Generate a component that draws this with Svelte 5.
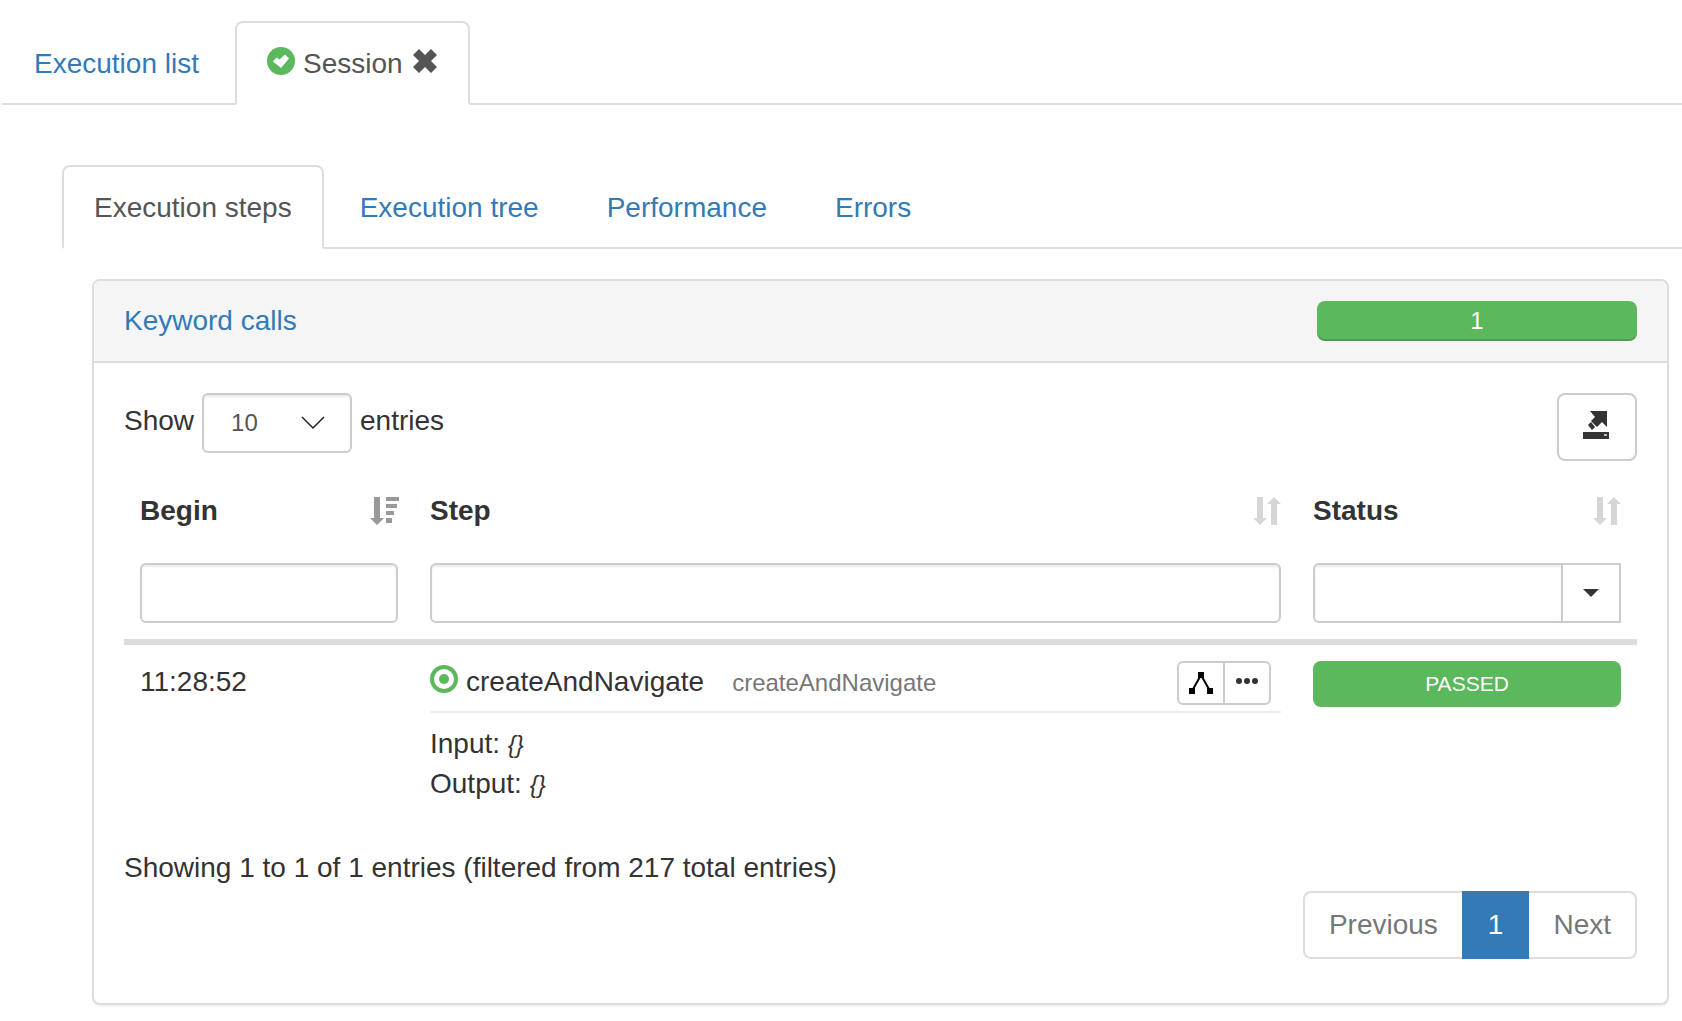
<script>
  let tab = $state('steps');
  let pageSize = $state('10');
  const tabs = [
    ['steps', 'Execution steps'],
    ['tree', 'Execution tree'],
    ['performance', 'Performance'],
    ['errors', 'Errors'],
  ];
</script>

{#snippet sortBoth()}
  <svg class="sort" width="28" height="28" viewBox="0 0 28 28" aria-hidden="true">
    <path d="M4 0h6v21h4l-7 7-7-7h4zM18 28h6V7h4l-7-7-7 7h4z" />
  </svg>
{/snippet}

<nav class="tabs outer">
  <a href="#list">Execution list</a>
  <a href="#session" class="active">
    <svg class="ok" width="28" height="28" viewBox="0 0 28 28" aria-hidden="true">
      <circle cx="14" cy="14" r="14" fill="#5cb85c" />
      <path d="M6 14.500l3.500-4 3 2L18 7.500l4 4L14 21z" fill="#fff" />
    </svg>
    <span>Session</span>
    <svg class="close" width="27" height="24" viewBox="-2 0 27 24" aria-hidden="true">
      <path d="M6 0l6 6 6-6 6 6-6 6 6 6-6 6-6-6-6 6-6-6 6-6-6-6z" fill="#555" />
    </svg>
  </a>
</nav>

<main>
  <nav class="tabs">
    {#each tabs as [id, label]}
      <a href={'#' + id} class:active={tab === id} onclick={() => (tab = id)}>{label}</a>
    {/each}
  </nav>

  <section class="panel">
    <header>
      <a href="#keywords">Keyword calls</a>
      <div class="progress">1</div>
    </header>

    <div class="body">
      <div class="toolbar">
        <label class="length">
          Show
          <span class="select">
            <select bind:value={pageSize}>
              <option>10</option>
              <option>25</option>
              <option>50</option>
            </select>
            <svg width="24" height="14" viewBox="0 0 24 14" aria-hidden="true">
              <path d="M1 1l11 11L23 1" fill="none" stroke="#222" stroke-width="1.500" />
            </svg>
          </span>
          entries
        </label>
        <button class="export" aria-label="Export">
          <svg width="28" height="28" viewBox="0 0 28 28" aria-hidden="true">
            <path d="M7 0h17v16l-5-5-5 5-6-6 4-4z" fill="#333" />
            <path d="M5 14l3-3 4 5-3 3z" fill="#333" />
            <path d="M0 21h26v7H0z" fill="#333" />
            <path d="M21 23h3v2h-3z" fill="#bbb" />
          </svg>
        </button>
      </div>

      <table>
        <colgroup><col class="c-begin" /><col /><col class="c-status" /></colgroup>
        <thead>
          <tr>
            <th>
              <div class="head">
                Begin
                <svg class="sort on" width="28" height="28" viewBox="0 0 28 28" aria-hidden="true">
                  <path d="M4 0h6v21h4l-7 7-7-7h4zM16 0h13v4H16zM16 7h11v4H16zM16 14h8v4h-8zM16 21h6v5h-6z" />
                </svg>
              </div>
            </th>
            <th><div class="head">Step {@render sortBoth()}</div></th>
            <th><div class="head">Status {@render sortBoth()}</div></th>
          </tr>
          <tr class="filters">
            <th><input type="text" aria-label="Filter begin" /></th>
            <th><input type="text" aria-label="Filter step" /></th>
            <th>
              <div class="combo">
                <input type="text" aria-label="Filter status" />
                <button aria-label="Choose status"><i class="caret"></i></button>
              </div>
            </th>
          </tr>
        </thead>
        <tbody>
          <tr>
            <td>11:28:52</td>
            <td>
              <div class="step">
                <svg width="28" height="28" viewBox="0 0 28 28" aria-hidden="true">
                  <circle cx="14" cy="14" r="12" fill="none" stroke="#5cb85c" stroke-width="4" />
                  <circle cx="14" cy="14" r="5" fill="#5cb85c" />
                </svg>
                <span>createAndNavigate</span>
                <small>createAndNavigate</small>
                <div class="actions">
                  <button aria-label="Show in tree">
                    <svg width="24" height="22" viewBox="0 0 24 22" aria-hidden="true">
                      <path d="M3 19l9-16 9 16" fill="none" stroke="#000" stroke-width="2" />
                      <path d="M9 0h6v6H9zM0 16h6v6H0zM18 16h6v6h-6z" />
                    </svg>
                  </button>
                  <button aria-label="More">
                    <svg class="dots" width="22" height="6" viewBox="0 0 22 6" aria-hidden="true">
                      <g fill="#333"><circle cx="3" cy="3" r="3" /><circle cx="11" cy="3" r="3" /><circle cx="19" cy="3" r="3" /></g>
                    </svg>
                  </button>
                </div>
              </div>
              <div class="io">Input: <em>{'{}'}</em></div>
              <div class="io">Output: <em>{'{}'}</em></div>
            </td>
            <td><div class="badge">PASSED</div></td>
          </tr>
        </tbody>
      </table>

      <p class="info">Showing 1 to 1 of 1 entries (filtered from 217 total entries)</p>
      <nav class="pages" aria-label="Pages">
        <a href="#prev">Previous</a>
        <a href="#1" class="current">1</a>
        <a href="#next">Next</a>
      </nav>
    </div>
  </section>
</main>

<style>
  :global(body) {
    font: 28px/40px 'Liberation Sans', Arial, sans-serif;
    color: #333;
    background: #fff;
  }
  :global(#app) { overflow-x: clip; }
  * { box-sizing: border-box; }
  a { color: #337ab7; text-decoration: none; }
  svg { display: block; flex: none; }
  input, select, button { font: inherit; margin: 0; }

  .tabs { display: flex; gap: 4px; border-bottom: 2px solid #ddd; }
  .tabs a {
    display: flex;
    align-items: center;
    gap: 8px;
    padding: 21px 30px 19px;
    margin-bottom: -2px;
    border: 2px solid transparent;
    border-radius: 8px 8px 0 0;
  }
  .tabs a.active { color: #555; background: #fff; border-color: #ddd #ddd transparent; }
  .outer { margin: 21px 0 0 2px; }
  .ok, .close { margin-bottom: 6px; }

  main { padding: 60px 0 16px 62px; }
  .panel {
    margin: 30px 13px 0 30px;
    border: 2px solid #ddd;
    border-radius: 8px;
    box-shadow: 0 2px 2px rgba(0, 0, 0, 0.05);
  }
  header {
    display: flex;
    justify-content: space-between;
    align-items: center;
    padding: 20px 30px;
    background: #f5f5f5;
    border-bottom: 2px solid #ddd;
    border-radius: 6px 6px 0 0;
  }
  .progress {
    width: 320px;
    border-radius: 8px;
    background: #5cb85c;
    box-shadow: inset 0 -2px 0 rgba(0, 0, 0, 0.15);
    color: #fff;
    font-size: 24px;
    text-align: center;
  }
  .body { padding: 30px 30px 44px; }
  .toolbar { display: flex; justify-content: space-between; align-items: flex-start; }
  .length { display: flex; gap: 8px; line-height: 56px; align-items: flex-start; }
  .select { position: relative; }
  .select svg { position: absolute; right: 27px; top: 23px; pointer-events: none; }
  select, input {
    display: block;
    height: 60px;
    border: 2px solid #ccc;
    border-radius: 6px;
    background: #fff;
    box-shadow: inset 0 2px 2px rgba(0, 0, 0, 0.075);
    color: #555;
    font-size: 24px;
  }
  select { appearance: none; width: 150px; padding: 0 27px; }
  input { width: 100%; padding: 10px 20px; }
  .export {
    display: grid;
    place-items: center;
    width: 80px;
    height: 68px;
    padding: 0 0 4px;
    border: 2px solid #ccc;
    border-radius: 8px;
    background: #fff;
  }

  table { width: 100%; margin-top: 14px; table-layout: fixed; border-collapse: separate; border-spacing: 0; }
  .c-begin { width: 290px; }
  .c-status { width: 340px; }
  th, td { padding: 16px; text-align: left; vertical-align: top; }
  td { line-height: 42px; }
  .head { display: flex; justify-content: space-between; align-items: center; }
  .sort { fill: #d6d6d6; overflow: visible; }
  .sort.on { fill: #999; }
  .filters th { border-bottom: 6px solid #ddd; }
  .combo { display: flex; }
  .combo input { flex: 1; min-width: 0; border-radius: 6px 0 0 6px; }
  .combo button {
    display: grid;
    place-items: center;
    width: 60px;
    margin-left: -2px;
    border: 2px solid #ccc;
    background: #fff;
  }
  .caret { border: 8px solid transparent; border-top-color: #333; border-bottom: 0; }

  .step { display: flex; align-items: flex-start; border-bottom: 2px solid #eee; padding-bottom: 6px; margin-bottom: 11px; }
  .step > svg { margin: 4px 8px 0 0; }
  .step small { margin-left: 28px; font-size: 24px; line-height: 44px; color: #777; }
  .actions { display: flex; margin: 0 10px 0 auto; border: 2px solid #ccc; border-radius: 6px; }
  .actions button { display: grid; place-items: center; width: 44px; height: 40px; padding: 0; border: 0; background: none; }
  .actions button + button { width: 46px; border-left: 2px solid #ccc; }
  .dots { margin-bottom: 4px; }
  .io { line-height: 40px; }
  em { font-size: 24px; line-height: 24px; }
  .badge { border-radius: 8px; background: #5cb85c; color: #fff; font-size: 21px; line-height: 46px; text-align: center; }

  .info { margin: 28px 0 3px; }
  .pages { display: flex; width: fit-content; margin-left: auto; }
  .pages a { padding: 12px 24px; border: 2px solid #ddd; color: #777; }
  .pages a:first-child { border-right: 0; border-radius: 8px 0 0 8px; }
  .pages a:last-child { border-left: 0; border-radius: 0 8px 8px 0; }
  .pages .current { background: #337ab7; border-color: #337ab7; color: #fff; }
</style>
